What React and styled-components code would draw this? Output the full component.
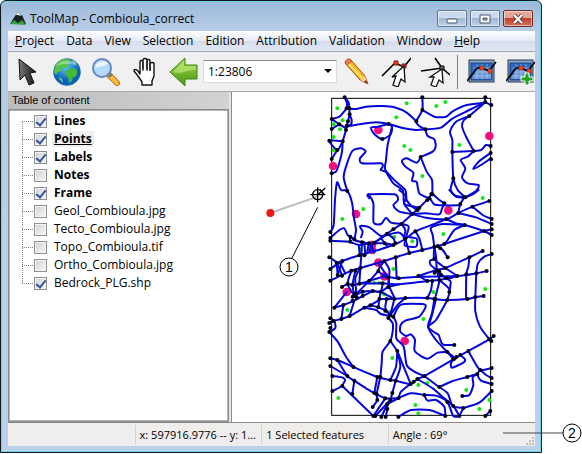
import { useState } from 'react';
import styled, { createGlobalStyle, css } from 'styled-components';

const menus = ['Project', 'Data', 'View', 'Selection', 'Edition', 'Attribution', 'Validation', 'Window', 'Help'];

const startLayers = [
    { name: 'Lines', on: true, strong: true },
    { name: 'Points', on: true, strong: true, current: true },
    { name: 'Labels', on: true, strong: true },
    { name: 'Notes', on: false, strong: true },
    { name: 'Frame', on: true, strong: true },
    { name: 'Geol_Combioula.jpg', on: false },
    { name: 'Tecto_Combioula.jpg', on: false },
    { name: 'Topo_Combioula.tif', on: false },
    { name: 'Ortho_Combioula.jpg', on: false },
    { name: 'Bedrock_PLG.shp', on: true },
];

// map geometry, x,y pairs in map units
const lines = [
    '76,22 83,40 82,55', '76,22 88,38 90,55 91,73 97,90 95,103 84,107',
    '82,55 110,57 140,50 190,48 225,52 262,68 291,94', '37,87 60,80 82,55',
    '37,87 50,96 60,103 80,115', '91,73 86,94 82,107 80,120 70,154', '37,117 60,103',
    '70,154 30,152 54,180 70,154', '70,154 68,185 58,225 50,245 37,250', '54,180 37,207',
    '82,110 120,103 170,97 208,102 250,114 290,120 318,118 365,113 400,85 450,60 498,36',
    '309,22 309,60 291,94 300,108 318,118', '309,60 345,80 380,80 400,64 440,46 498,38',
    '498,22 498,36 516,45', '498,36 478,54 450,78',
    '208,102 175,110 155,113 165,132 189,147 214,133 218,110 208,102',
    '218,110 205,165 200,210 198,240 230,275 258,300 262,330 279,350 295,360',
    '200,245 222,280 250,300 253,330 256,345 279,372',
    '84,303 73,260 85,215 100,182 125,175 139,185 122,205 128,220 185,220 190,230 184,240 200,245',
    '33,426 43,405 47,330 53,277 65,300 84,303 98,338 104,385 110,420 105,448',
    '318,118 325,138 345,148 349,170 340,185 304,201', '304,201 322,245 338,270 339,313',
    '304,201 292,218 262,205 248,212 258,230 282,248 278,272 292,276 300,310 330,325',
    '450,78 410,95 392,125 399,150 399,186 402,265 415,300 438,322',
    '450,78 434,90 428,108 440,140 463,183', '399,186 463,183 485,180 500,165 514,168',
    '463,183 445,200 424,210 438,235 428,262 445,280 478,285 470,303 438,322',
    '402,265 394,300 410,318 438,322', '514,205 490,222 462,237 478,215 514,189',
    '150,325 148,313 225,313 236,330 222,346 240,365 279,372',
    '148,313 162,340 163,398 185,402 200,383 215,398 246,402',
    '246,402 279,372 300,353 330,322 339,313 360,330 375,340',
    '330,322 345,343 375,346 423,346', '435,322 423,342 417,369', '390,300 410,320 435,322 460,313 478,300',
    '279,372 320,370 360,373 368,355 375,342', '240,300 260,320 256,343 300,353',
    '279,372 320,383 381,387 417,369 459,350 510,333', '459,350 490,375 517,387', '417,369 470,382 517,402',
    '33,444 60,420 75,415 85,435 105,448', '33,452 93,455',
    '93,440 105,450 128,457 148,460 165,458 203,431 222,418 246,402',
    '165,458 200,436 240,428 258,447', '246,402 268,410 258,447',
    '125,442 130,425 122,408 150,412 185,438 203,431', '93,440 93,455 120,465 148,460',
    '120,496 160,485 222,465 258,447 288,424 345,402 381,387',
    '165,460 196,460 222,465', '203,431 222,445 228,460', '185,445 205,470',
    '33,537 69,513 120,496', '30,502 52,518 68,557', '69,513 55,555', '52,518 55,555', '60,515 78,550',
    '33,572 96,542 123,534 195,513 229,502 270,489 309,480 345,471 375,462 495,423 517,418',
    '495,423 517,435', '258,447 270,489', '288,424 300,445 309,480', '246,402 258,420 253,443',
    '262,440 256,466 290,470 292,446 262,440', '229,502 232,565', '195,513 177,543 207,563',
    '177,520 207,563', '195,513 210,540 207,591', '128,457 126,496 123,534 120,581', '148,460 143,490',
    '135,457 138,496', '152,460 165,488', '160,460 150,486', '118,465 122,496',
    '68,591 85,582 99,585 120,581 150,572 177,543', '150,572 195,560 238,565 300,560 414,558 471,550 502,543',
    '105,618 150,572', '96,542 85,582 105,618', '108,542 100,585 105,618', '123,534 108,565 112,615',
    '297,558 352,540 378,534 450,502 490,483', '120,581 189,580 240,583 324,573 360,570 414,558',
    '297,558 324,573', '105,618 130,605 160,603 184,605 207,591 240,583',
    '345,471 340,435 335,413 370,402 436,405', '436,405 405,420 385,450 375,462', '381,387 410,400 436,405 495,423',
    '345,471 345,507 378,534', '345,507 332,512 334,525 352,540 382,565 414,558', '345,471 350,500 352,540',
    '355,470 370,480 385,502', '450,502 447,530 441,553 440,627', '517,492 495,500 476,520 471,550 468,620',
    '352,540 360,570 355,595 348,622', '360,570 390,598 384,630', '382,565 394,575 390,606', '339,573 335,600 324,624',
    '378,534 414,558', '160,603 184,605 190,580', '184,605 225,627', '207,563 210,590 225,622',
    '180,627 225,627 258,624 324,624 345,627 384,630 444,627 468,621 493,618',
    '45,653 72,645 105,632 130,618 160,603', '72,645 66,687', '45,653 82,606',
    '30,699 45,692 66,687 91,678 135,653 153,646 184,627', '91,678 105,632', '30,726 48,714 45,693 33,685',
    '30,726 55,755 80,800 102,831', '135,653 170,660 185,672 222,680', '153,646 177,652 198,662 213,675',
    '184,605 180,627 177,652', '202,627 198,655 213,675', '225,627 213,675', '213,675 235,645 258,624',
    '222,680 245,644 310,642 319,650 300,680 258,692 244,705 243,725 260,738 275,733 287,750 285,780 300,795 325,806 355,788 384,786',
    '207,684 220,700 220,725 213,753 190,785 187,820 183,861', '213,753 234,783', '222,680 231,700 231,745 253,770 262,825 285,845 315,858',
    '234,783 243,830 229,872', '234,783 230,830 213,870', '234,783 255,835 274,882',
    '33,805 54,810 102,831 174,861 213,870 229,872 274,882 294,867 315,858 402,808 447,783 510,748 523,738',
    '54,810 84,858 105,872 140,895 165,909', '33,828 84,858', '105,872 99,912',
    '39,858 68,862 77,872 62,892 39,903', '69,888 162,978', '165,909 198,925 238,924', '174,861 165,909',
    '183,861 172,912 174,930 160,951', '219,909 213,930 204,942 204,957 199,981', '198,925 162,978', '204,942 186,981',
    '213,930 168,978', '229,872 219,909', '238,924 245,905 273,882', '238,924 204,942',
    '237,981 275,960 330,960 378,978', '238,924 275,910 315,915',
    '345,627 338,670 326,710 350,750 384,786 402,808', '384,630 350,690 326,710 350,730 358,735 370,763 405,765',
    '350,627 338,675 328,708', '468,621 468,665 482,710 510,748 516,753', '384,786 402,800 408,808',
    '402,808 395,820 398,833 432,818 437,808 423,795', '447,783 465,815 483,840 517,834', '483,840 500,855 517,864',
    '483,840 474,852 485,872 517,882', '360,891 400,873 444,861 474,852', '474,852 460,862 462,885 450,915 429,918',
    '432,954 480,938 517,903', '294,867 340,895 375,925 402,948 420,978', '315,858 355,888 385,910 400,948 432,954',
    '315,915 325,932 350,930 375,950 378,978', '315,915 350,917 384,936 402,978 420,978', '432,954 420,978', '498,978 513,963',
];

const nodes = `76,22 82,55 90,55 91,73 37,87 60,103 86,94 82,107 80,120 37,117 30,152 70,154 54,180 37,207 37,250
84,303 189,147 208,102 291,94 309,22 309,60 318,118 498,22 498,36 516,45 450,78 514,168 514,189 515,208
463,183 399,186 304,201 402,265 339,313 438,322 330,325 33,426 33,444 33,452 93,440 93,455 105,448 128,457
148,460 165,458 30,502 52,518 69,513 33,537 33,572 55,555 68,557 120,496 135,496 123,534 96,542 108,542
196,460 203,431 222,418 246,402 279,372 295,360 288,424 222,465 228,460 258,447 270,489 229,502 195,513
177,543 207,563 238,565 297,558 68,591 150,572 120,581 85,582 99,585 130,605 160,603 190,580 207,591
184,605 105,618 336,312 324,330 300,353 375,340 423,342 435,322 510,333 459,350 417,369 381,387 436,405
517,387 517,402 517,418 517,435 495,423 309,480 345,471 355,468 363,475 375,462 385,502 345,507 450,502
490,483 517,492 502,543 471,550 441,553 378,534 352,540 360,545 346,548 382,565 360,570 339,573 324,573
414,558 365,555 390,606 348,627 384,630 444,627 258,624 324,624 345,627 468,621 493,618 45,653 72,645
66,687 91,678 33,685 30,699 33,714 30,726 43,693 135,653 153,646 130,618 100,620 108,610 100,632 112,622
180,627 202,627 225,627 177,652 198,662 213,675 222,680 207,684 213,753 234,783 33,805 54,810 33,828
102,831 39,858 84,858 69,888 105,872 39,903 99,912 174,861 183,861 213,870 229,872 165,909 172,912
174,930 160,951 198,925 213,930 219,909 204,942 238,924 204,957 162,978 168,978 186,981 199,981 237,981
274,882 283,875 294,867 405,765 384,786 402,808 411,801 423,795 447,783 510,748 523,738 516,753 517,834
517,864 517,882 517,903 483,840 474,852 444,861 429,918 360,891 315,858 315,915 384,936 402,948 432,954
420,978 378,978 498,978 513,963`;

const labels = `54,55 262,40 231,82 70,91 43,103 62,118 43,141 43,180 255,168 273,180 351,48 378,36 420,165 309,258
490,324 132,357 69,387 279,454 225,441 222,537 165,579 180,579 195,613 123,478 372,432 498,597 342,606 84,660
212,666 219,804 57,924 297,885 288,945 297,970 312,687 324,879 441,900 480,957 510,930`;

const samples = '177,120 41,228 510,138 110,372 158,465 158,480 177,518 195,559 82,606 387,361 256,753';

const toPoints = (text) => text.trim().split(/\s+/).map((p) => p.split(',').map(Number));

// rounds a list of points into a soft curve through all of them
const toCurve = (text) => {
    const p = toPoints(text);
    let d = `M${p[0]}`;
    for (let i = 0; i < p.length - 1; i++) {
        const a = p[i - 1] || p[i];
        const b = p[i];
        const c = p[i + 1];
        const e = p[i + 2] || c;
        d += `C${b[0] + (c[0] - a[0]) / 8} ${b[1] + (c[1] - a[1]) / 8} ${c[0] - (e[0] - b[0]) / 8} ${c[1] - (e[1] - b[1]) / 8} ${c}`;
    }
    return d;
}

const Dots = ({ at, r, color }) => (
    <g fill={color}>
        {toPoints(at).map(([x, y], i) => <circle key={i} cx={x} cy={y} r={r} />)}
    </g>
);

function Map() {
    return (
        <MapSvg viewBox="-261 6 906 990" role="img" aria-label="Map of Combioula">
            <rect x="37" y="25" width="477" height="951" fill="none" stroke="#000" strokeWidth="3" />
            <Dots at={labels} r={6} color="#14e614" />
            <Dots at={samples} r={13} color="#f5107e" />
            <g fill="none" stroke="#0404dc" strokeWidth="6" strokeLinejoin="round" strokeLinecap="round">
                {lines.map((l, i) => <path key={i} d={toCurve(l)} />)}
            </g>
            <Dots at={nodes} r={6} color="#000014" />
            <path d="M-147 369L-5 320" stroke="#bdbdbd" strokeWidth="6" />
            <circle cx="-147" cy="369" r="12" fill="#f01414" />
            <g fill="none" stroke="#000" strokeWidth="3">
                <circle cx="-5" cy="314" r="15" strokeWidth="4" />
                <path d="M-27 314H18M-5 292V337M-5 314L18 294M2 298L14 312" strokeWidth="4" />
                <path d="M-5 352L-83 506" />
                <circle cx="-91" cy="531" r="27" />
            </g>
            <text x="-91" y="545" textAnchor="middle" fontSize="42">1</text>
        </MapSvg>
    );
}

const Icon = ({ children }) => <svg width="30" height="30" viewBox="0 0 30 30" aria-hidden="true">{children}</svg>;

const Screen = () => (
    <>
        <rect x="2" y="3" width="25" height="22" fill="#8fa9c9" stroke="#27364d" />
        <rect x="4" y="6" width="21" height="17" fill="#2c68bd" stroke="#183f82" />
        <path d="M6 11H24M6 15H24M6 19H24M10 7V22M15 7V22M20 7V22" stroke="#7fb0e8" strokeWidth=".8" />
        <path d="M5 21L11 12H16L21 15L24 13V22H5Z" fill="#e8f1fb" opacity=".35" />
        <path d="M0 24L10 11H15L22 14L29 5" fill="none" stroke="#000" strokeWidth="1.6" />
        <path d="M13 9h4v4h-4zM21 12h4v4h-4z" fill="#f0431d" stroke="#8b2008" strokeWidth=".5" />
    </>
);

const ArrowIcon = () => (
    <Icon>
        <linearGradient id="dark"><stop stopColor="#777" /><stop offset="1" stopColor="#151515" /></linearGradient>
        <path d="M6 2L7 23L12 18L16 28L21 26L17 16L23 15Z" fill="url(#dark)" stroke="#111" />
    </Icon>
);

const GlobeIcon = () => (
    <Icon>
        <radialGradient id="sea" cx=".45" cy=".3"><stop stopColor="#5fc4f3" /><stop offset="1" stopColor="#0a62b8" /></radialGradient>
        <circle cx="15" cy="15" r="13.5" fill="url(#sea)" stroke="#1c68a8" strokeWidth=".5" />
        <path d="M3 10C5 4 11 1 16 2L19 4L15 6L17 9L13 11L9 10L10 14L6 15L4 18L2 15Z" fill="#55c444" />
        <path d="M15 13L19 11L24 12C26 15 25 18 23 20L21 20L20 24L17 26L16 20L13 18L13 15Z" fill="#45b83c" />
        <path d="M20 3L25 6L22 7ZM6 20L10 22L11 26Z" fill="#8be06c" />
        <path d="M4 9C8 3 20 1 26 9C18 6 10 7 4 9Z" fill="#fff" opacity=".35" />
    </Icon>
);

const ZoomIcon = () => (
    <Icon>
        <path d="M18 18L26 26" stroke="#b6671a" strokeWidth="6" strokeLinecap="round" />
        <path d="M19 19L26 26" stroke="#ffbb38" strokeWidth="4" strokeLinecap="round" />
        <path d="M18 20L21 17" stroke="#687487" strokeWidth="2" />
        <circle cx="11" cy="11" r="9" fill="#b7daf8" stroke="#6387c2" strokeWidth="2" />
        <path d="M4 11C5 5 11 3 17 6C15 10 9 9 4 11Z" fill="#fff" opacity=".75" />
    </Icon>
);

const HandIcon = () => (
    <Icon>
        <path d="M12 28V25L8 19L4 14C4 12 6 12 8 14L10 17V5C10 3 13 3 13 5V12V3C13 1 17 1 17 3V12V4C17 2 20 2 20 4V13V7C20 5 24 5 24 7V19L22 24V28Z" fill="#fff" stroke="#111" strokeWidth="1.4" strokeLinejoin="round" />
        <path d="M13 5V14M17 4V14M20 6V14" stroke="#111" />
    </Icon>
);

const BackIcon = () => (
    <Icon>
        <linearGradient id="leaf" x2="0" y2="1"><stop stopColor="#a2d84c" /><stop offset="1" stopColor="#469711" /></linearGradient>
        <path d="M1 15L16 1V8H28V22H16V29Z" fill="url(#leaf)" stroke="#3f8716" />
        <path d="M4 15L15 4V9H27V13C18 12 13 18 4 15Z" fill="#c6eb82" opacity=".6" />
    </Icon>
);

const PencilIcon = () => (
    <Icon>
        <path d="M3 6L8 2L23 19L26 27L18 23Z" fill="#ffb51e" stroke="#a84a0c" />
        <path d="M6 6L20 21" stroke="#ffe27a" strokeWidth="2" />
        <path d="M3 6C3 3 6 1 8 2L10 4L5 8Z" fill="#ef755a" stroke="#a84a0c" strokeWidth=".7" />
        <path d="M23 19L26 27L18 23Z" fill="#f5cf9e" />
        <path d="M24 23L26 27L22 25Z" fill="#7b1c12" />
    </Icon>
);

const EditNodeIcon = () => (
    <Icon>
        <path d="M1 19L14 6L23 10L30 1" fill="none" stroke="#000" strokeWidth="1.6" />
        <path d="M13 4h4v4h-4zM21 7h4v4h-4z" fill="#f0431d" stroke="#7d1a08" />
        <path d="M23 9L11 20L15 19L12 28L17 30L20 22L24 25Z" fill="#fff" stroke="#111" strokeWidth="1.3" />
    </Icon>
);

const CutNodeIcon = () => (
    <Icon>
        <path d="M1 14L22 11L30 18M15 1L22 11" fill="none" stroke="#000" strokeWidth="1.6" />
        <path d="M20 9h4v4h-4z" fill="#777" stroke="#000" />
        <path d="M22 12L10 20L14 20L11 28L16 30L19 23L23 26Z" fill="#fff" stroke="#111" strokeWidth="1.3" />
    </Icon>
);

const tools = [
    ['Select', ArrowIcon], ['Full extent', GlobeIcon], ['Zoom', ZoomIcon], ['Pan', HandIcon], ['Previous zoom', BackIcon],
];
const editTools = [['Draw', PencilIcon], ['Edit vertex', EditNodeIcon], ['Insert vertex', CutNodeIcon]];

export default function App() {
    const [layers, setLayers] = useState(startLayers);

    const toggle = (name) => {
        setLayers(layers.map((l) => (l.name === name ? { ...l, on: !l.on } : l)));
    }

    const renderTool = ([name, Glyph]) => <Tool key={name} aria-label={name}><Glyph /></Tool>;

    return (
        <Page>
            <GlobalStyle />
            <Window>
                <TitleBar>
                    <svg width="16" height="16" viewBox="0 0 16 16" aria-hidden="true">
                        <path d="M0 13L5 5L8 1L10 5L12 4L16 13Z" fill="#18221c" />
                        <path d="M6 4L8 1L10 5L8 4Z" fill="#fff" />
                        <path d="M0 13L4 9L8 12L12 9L16 14Z" fill="#379a42" />
                    </svg>
                    <Title>ToolMap - Combioula_correct</Title>
                    <WinButton aria-label="Minimize">
                        <svg width="12" height="10"><rect x="1" y="5" width="10" height="4" rx="1" fill="#fff" stroke="#4a5566" /></svg>
                    </WinButton>
                    <WinButton aria-label="Maximize">
                        <svg width="12" height="10"><path d="M1 1h10v8H1zM4 4h4v2H4z" fill="#fff" fillRule="evenodd" stroke="#4a5566" /></svg>
                    </WinButton>
                    <WinButton aria-label="Close" $close>
                        <svg width="12" height="10">
                            <path d="M2 1L10 9M10 1L2 9" stroke="#5a3434" strokeWidth="4" />
                            <path d="M2 1L10 9M10 1L2 9" stroke="#fff" strokeWidth="2.4" />
                        </svg>
                    </WinButton>
                </TitleBar>

                <MenuBar>
                    {menus.map((m) => (
                        <MenuItem key={m}>
                            {m === 'Project' || m === 'Help' ? <><u>{m[0]}</u>{m.slice(1)}</> : m}
                        </MenuItem>
                    ))}
                </MenuBar>

                <ToolBar>
                    {tools.map(renderTool)}
                    <ScaleBox>
                        <ScaleSelect aria-label="Scale">
                            <option>1:23806</option>
                        </ScaleSelect>
                        <svg width="8" height="5" aria-hidden="true"><path d="M0 0H8L4 4Z" /></svg>
                    </ScaleBox>
                    {editTools.map(renderTool)}
                    <Separator />
                    <Tool aria-label="Attributes"><Icon><Screen /></Icon></Tool>
                    <Tool aria-label="Add attributes">
                        <Icon>
                            <Screen />
                            <path d="M19 16h4v4h4v4h-4v4h-4v-4h-4v-4h4z" fill="#21a51c" stroke="#fff" />
                        </Icon>
                    </Tool>
                </ToolBar>

                <Content>
                    <Side>
                        <SideTitle>Table of content</SideTitle>
                        <Tree>
                            {layers.map((l) => (
                                <Layer key={l.name}>
                                    <Check type="checkbox" id={l.name} checked={l.on} onChange={() => toggle(l.name)} />
                                    <LayerName htmlFor={l.name} $strong={l.strong} $current={l.current}>{l.name}</LayerName>
                                </Layer>
                            ))}
                        </Tree>
                    </Side>
                    <MapPane><Map /></MapPane>
                </Content>

                <StatusBar>
                    <Status />
                    <Status>x: 597916.9776 -- y: 1...</Status>
                    <Status>1 Selected features</Status>
                    <Status>Angle : 69°</Status>
                    <Grip width="10" height="10" aria-hidden="true">
                        <path d="M7 1h2v2H7zM4 4h2v2H4zM7 4h2v2H7zM1 7h2v2H1zM4 7h2v2H4zM7 7h2v2H7z" />
                    </Grip>
                </StatusBar>
            </Window>

            <Callout width="80" height="20" viewBox="0 0 80 20" aria-hidden="true">
                <path d="M1 10H61" stroke="#444" />
                <circle cx="70" cy="10" r="9" fill="#fff" stroke="#000" />
                <text x="70" y="15" textAnchor="middle" fontSize="14">2</text>
            </Callout>
        </Page>
    )
}

const GlobalStyle = createGlobalStyle`
    * { box-sizing: border-box; }
    body {
        margin: 0;
        background: #fff;
        color: #000;
        font: 12px/18px "Open Sans", "Noto Sans", sans-serif;
    }
    button, select { font: inherit; color: inherit; }
    svg text { font-family: "Liberation Sans", Arial, sans-serif; }
`;

const Page = styled.div`
    position: relative;
    display: flex;
    height: 100vh;
    min-height: 400px;
    padding: 0 40px 1px 0;
`;

// -----------------WINDOW-----------------
const Window = styled.main`
    flex: 1;
    min-width: 0;
    display: flex;
    flex-direction: column;
    padding: 0 6px 6px 7px;
    border: 1px solid #10191f;
    border-radius: 6px 6px 0 0;
    background: linear-gradient(#9db9d9, #b6cde8 30px, #b9d1ea);
    box-shadow: inset 0 0 0 1px #70d3ec;
`;

const TitleBar = styled.header`
    display: flex;
    align-items: center;
    flex: 0 0 30px;
    gap: 3px;
    padding: 5px 2px 0;
`;

const Title = styled.h1`
    flex: 1;
    margin: 0;
    padding-left: 1px;
    font-size: 12px;
    font-weight: 400;
    white-space: nowrap;
`;

const WinButton = styled.button`
    display: flex;
    align-items: center;
    justify-content: center;
    width: 30px;
    height: 17px;
    padding: 0;
    border: 1px solid #65788f;
    border-radius: 2px;
    background: linear-gradient(#cbdbed 45%, #9eb6d0 50%, #bdd3e9);
    box-shadow: inset 0 0 0 1px rgba(255,255,255,0.5);
    ${({ $close }) => $close && css`
        border-color: #6b2d2a;
        background: linear-gradient(#e5a597 45%, #c2412d 50%, #d4705b);
    `}
`;

// -----------------BARS-----------------
const MenuBar = styled.nav`
    display: flex;
    flex: 0 0 21px;
    border-bottom: 1px solid #a2a5ad;
    background: linear-gradient(#fff, #e4e9f5 50%, #d5dcec 52%, #e2e7f5);
`;

const MenuItem = styled.button`
    padding: 0 5px 0 7px;
    border: 0;
    background: none;
    white-space: nowrap;
`;

const ToolBar = styled.div`
    display: flex;
    align-items: center;
    flex: 0 0 40px;
    overflow: hidden;
    border-bottom: 1px solid #a6a6a6;
    background: #f0f0f0;
`;

const Tool = styled.button`
    display: flex;
    justify-content: center;
    flex: 0 0 39px;
    padding: 0;
    border: 0;
    background: none;
`;

const ScaleBox = styled.div`
    display: flex;
    align-items: center;
    flex: 0 0 134px;
    height: 23px;
    padding-right: 4px;
    border: 1px solid #dcdcdc;
    border-top-color: #8c8c8c;
    background: #fff;
`;

const ScaleSelect = styled.select`
    appearance: none;
    flex: 1;
    min-width: 0;
    padding: 0 4px;
    border: 0;
    background: none;
`;

const Separator = styled.div`
    flex: 0 0 1px;
    height: 34px;
    margin: 0 4px 0 3px;
    background: #808080;
`;

// -----------------CONTENT-----------------
const Content = styled.div`
    display: flex;
    flex: 1;
    min-height: 0;
    gap: 2px;
    border-bottom: 1px solid #8a8a8a;
    background: #e4e4e4;
`;

const Side = styled.section`
    display: flex;
    flex-direction: column;
    flex: 0 0 42%;
`;

const SideTitle = styled.h2`
    margin: 0;
    padding: 0 4px;
    font: 11px/17px "Liberation Sans", Arial, sans-serif;
    background: linear-gradient(90deg, #bcbcbc, #d2d2d2);
`;

const Tree = styled.ul`
    flex: 1;
    margin: 0;
    padding: 2px 0 0 13px;
    list-style: none;
    border: 1px solid #8c8c8c;
    outline: 1px solid #b4b4b4;
    outline-offset: -2px;
    background: #fff;
`;

const Layer = styled.li`
    display: flex;
    align-items: center;
    height: 18px;

    /* dotted trunk and branch */
    &::before {
        content: '';
        align-self: flex-start;
        width: 12px;
        height: 18px;
        background:
            repeating-linear-gradient(#888 0 1px, transparent 1px 2px) 0 0 / 1px 100% no-repeat,
            repeating-linear-gradient(90deg, #888 0 1px, transparent 1px 2px) 0 9px / 100% 1px no-repeat;
    }
    &:first-child::before { clip-path: inset(9px 0 0 0); }
    &:last-child::before { clip-path: inset(0 0 8px 0); }
`;

const Check = styled.input`
    appearance: none;
    display: flex;
    justify-content: center;
    width: 13px;
    height: 13px;
    margin: 0 5px 0 0;
    border: 1px solid #8e8f8f;
    background: linear-gradient(135deg, #cfd2d6, #f6f6f6);
    box-shadow: inset 0 0 0 1px #f4f4f4;

    &:checked::before {
        content: '';
        width: 4px;
        height: 8px;
        border: solid #3d55a0;
        border-width: 0 2px 2px 0;
        transform: rotate(40deg);
    }
`;

const LayerName = styled.label`
    padding: 0 2px;
    line-height: 16px;
    font-weight: ${({ $strong }) => $strong ? '700' : '400'};
    ${({ $current }) => $current && css`
        text-decoration: underline;
        background: #f0f0f0;
    `}
`;

const MapPane = styled.section`
    flex: 1;
    min-width: 0;
    border-left: 1px solid #8c8c8c;
    background: #fff;
`;

const MapSvg = styled.svg`
    display: block;
    width: 100%;
    height: 100%;
`;

// -----------------STATUS-----------------
const StatusBar = styled.footer`
    display: grid;
    grid-template-columns: 12fr 12fr 12fr 13fr 10px;
    align-items: center;
    flex: 0 0 23px;
    background: #f0eded;
`;

const Status = styled.div`
    min-width: 0;
    height: 20px;
    padding: 0 4px;
    font-size: 11px;
    line-height: 20px;
    white-space: nowrap;
    overflow: hidden;
    & + & { border-left: 1px solid #d5d2d2; }
`;

const Grip = styled.svg`
    align-self: end;
    fill: #c3bfbf;
`;

const Callout = styled.svg`
    position: absolute;
    right: 0;
    bottom: 11px;
`;
